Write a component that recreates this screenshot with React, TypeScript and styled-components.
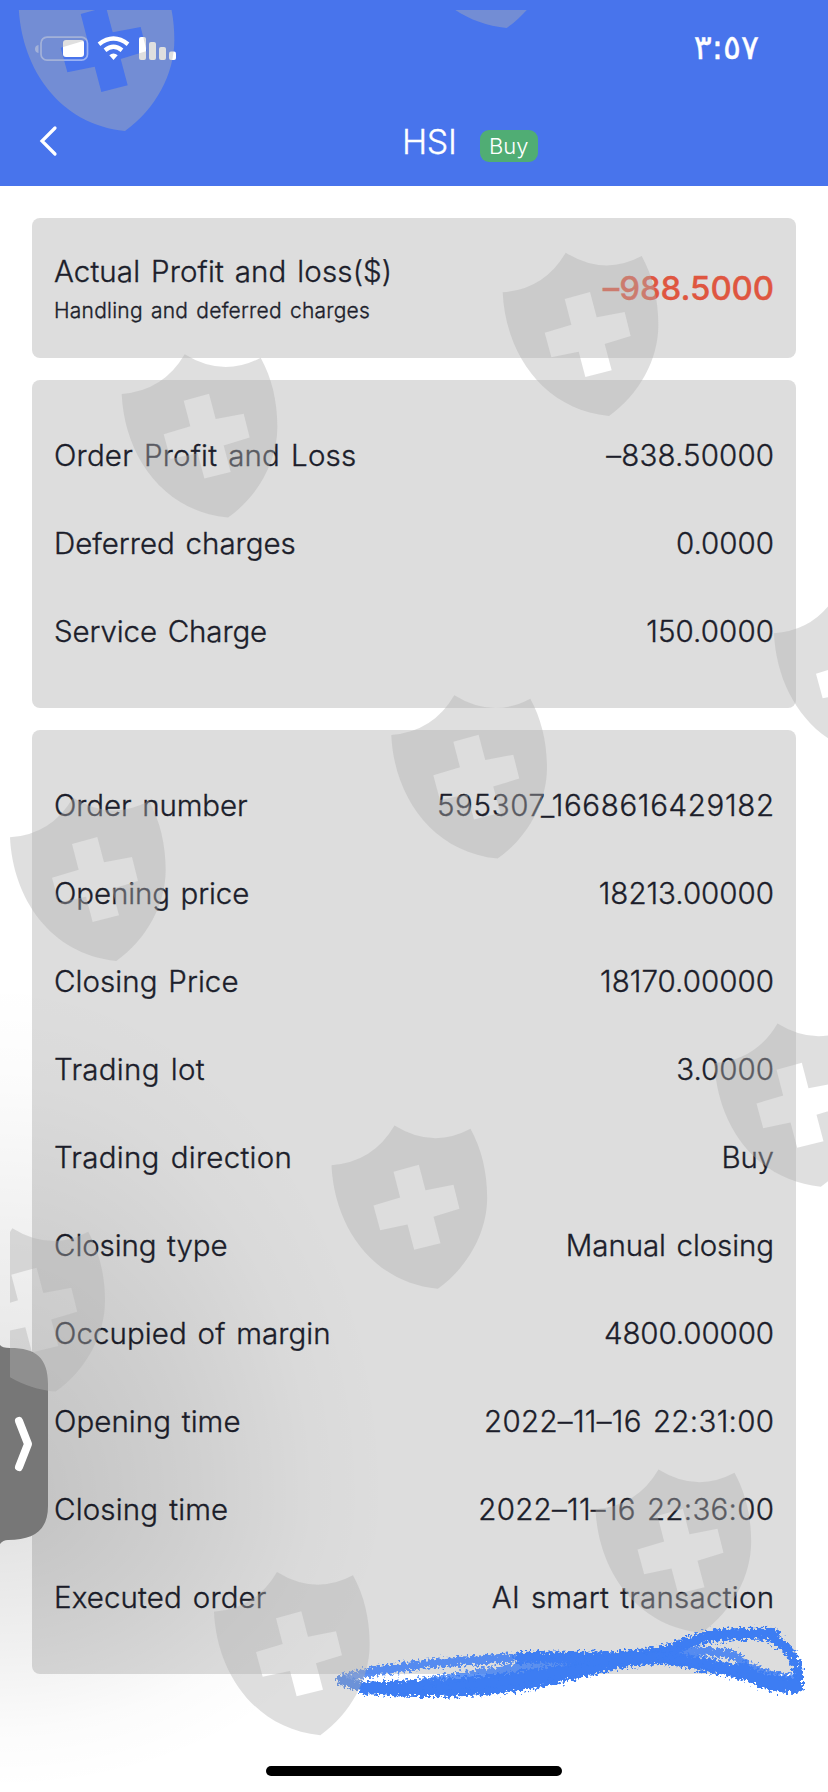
import React from 'react';
import styled, { createGlobalStyle } from 'styled-components';

const Global = createGlobalStyle`
  * { box-sizing: border-box; }
  body { margin: 0; background: #fff; font-family: Inter, "Liberation Sans", sans-serif; color: #1c1e2b; }
`;
const Page = styled.div`position: relative; width: 828px; height: 1792px; overflow: hidden; background: #fff;`;
const Header = styled.header`height: 186px; background: #4874ec; color: #fff; display: flex; flex-direction: column;`;
const StatusBar = styled.div`height: 96px; padding: 0 69px 0 34px; display: flex; justify-content: space-between; align-items: center;`;
const Clock = styled.time`font: 400 33.5px "DejaVu Sans", sans-serif; line-height: 98px; direction: ltr; unicode-bidi: bidi-override; -webkit-text-stroke: 0.4px currentColor;`;
const NavBar = styled.div`height: 90px; display: grid; grid-template-columns: 402px auto 1fr; align-items: start;`;
const Back = styled.button`border: 0; background: none; padding: 28px 0 0 38px; text-align: left; line-height: 0;`;
const Title = styled.h1`margin: 0; font-size: 34px; font-weight: 300; line-height: 92px; letter-spacing: -0.3px; -webkit-text-stroke: 0.3px currentColor;`;
const Tag = styled.span`justify-self: start; margin: 34px 0 0 23px; width: 58px; height: 32px; border-radius: 9px; background: #50ad74; font-size: 22px; font-weight: 300; line-height: 33px; text-align: center;`;
const Content = styled.main`padding: 32px 32px 0; display: flex; flex-direction: column; gap: 22px;`;
const Card = styled.section`background: #ddd; border-radius: 8px; padding: 31px 22px 33px; -webkit-text-stroke: 0.35px currentColor;`;
const Summary = styled(Card)`height: 140px; display: flex; justify-content: space-between; padding: 34px 22px;`;
const Heading = styled.div`font-size: 29.5px; font-weight: 300; line-height: 38px; letter-spacing: 0.12px; word-spacing: 2.5px;`;
const Sub = styled.div`font-size: 21px; font-weight: 300; line-height: 42px; letter-spacing: 0.24px; word-spacing: 2px;`;
const Loss = styled.strong`color: #df5640; font-size: 33px; font-weight: 500; line-height: 72px; letter-spacing: -0.1px;`;
const Row = styled.div`height: 88px; display: flex; align-items: center; justify-content: space-between; font-size: 29.5px; font-weight: 300; word-spacing: 2.5px;`;
const Label = styled.span<{ $tracking: number }>`letter-spacing: ${p => p.$tracking}px;`;
const Value = styled(Label)`margin-right: ${p => -p.$tracking}px;`;
const Layer = styled.svg`position: absolute; left: 0; top: 0; pointer-events: none;`;

type Entry = { label: string; value: string; lt: number; vt: number };
const charges: Entry[] = [
  { label: 'Order Profit and Loss', value: '–838.50000', lt: 0.2, vt: 0.15 },
  { label: 'Deferred charges', value: '0.0000', lt: 0, vt: 0 },
  { label: 'Service Charge', value: '150.0000', lt: -0.1, vt: 0.1 },
];
const order: Entry[] = [
  { label: 'Order number', value: '595307_1668616429182', lt: -0.1, vt: 0.66 },
  { label: 'Opening price', value: '18213.00000', lt: -0.1, vt: 0 },
  { label: 'Closing Price', value: '18170.00000', lt: 0.06, vt: 0.05 },
  { label: 'Trading lot', value: '3.0000', lt: 0.3, vt: 0 },
  { label: 'Trading direction', value: 'Buy', lt: 0.28, vt: -0.2 },
  { label: 'Closing type', value: 'Manual closing', lt: -0.1, vt: -0.1 },
  { label: 'Occupied of margin', value: '4800.00000', lt: 0.06, vt: -0.1 },
  { label: 'Opening time', value: '2022–11–16 22:31:00', lt: 0.05, vt: 0.32 },
  { label: 'Closing time', value: '2022–11–16 22:36:00', lt: 0.16, vt: 0.3 },
  { label: 'Executed order', value: 'AI smart transaction', lt: 0.12, vt: 0.24 },
];
const shields = [
  [18.7, -32.3], [400.4, -135.3], [502.7, 252.7], [121.7, 354.3], [774, 593.7], [391.3, 695.3],
  [10, 797.7], [714.5, 1023.5], [331.5, 1125.5], [-50.7, 1228.3], [595.5, 1469.5], [214, 1572],
];
const shieldPath =
  'M0 119Q125 110 189 0Q304 71 417 10C450 70 467 140 467 217C467 320 410 425 319 490C120 470 8 300 0 119Z' +
  'M186 139L206 216L126 240L146 314L228 297L248 373L327 353L306 274L384 250L366 178L282 194L262 118Z';

function StatusIcons() {
  return (
    <svg width="146" height="28" viewBox="34 35 146 28" fill="#fff">
      <path d="M38.500 46Q35 46.500 35 50Q35 53.500 38.500 54Z" opacity=".45" />
      <rect x="41" y="38.200" width="46.500" height="23" rx="6" fill="none" stroke="#fff" strokeWidth="1.700" opacity=".45" />
      <rect x="63" y="41" width="21" height="17" rx="3" />
      <g fill="none" stroke="#fff" strokeWidth="4.400">
        <path d="M99 45.200Q113.500 34 128 45.200" />
        <path d="M105 51.200Q113.500 44.500 122 51.200" />
      </g>
      <path d="M109.300 56.200Q113.500 53 117.700 56.200L113.500 61Z" />
      <rect x="139" y="38" width="7" height="23" rx="2" />
      <rect x="149" y="43" width="7" height="18" rx="2" />
      <rect x="159" y="48" width="7" height="13" rx="2" />
      <rect x="169" y="52.500" width="7" height="8.500" rx="2" />
    </svg>
  );
}

function Scribble() {
  return (
    <g fill="none" stroke="#3c7df3" strokeLinecap="round" strokeLinejoin="round" filter="url(#crayon)">
      <path d="M342 1679C385 1666 455 1661 510 1658" strokeWidth="9" opacity=".85" />
      <path d="M520 1658C580 1656 640 1663 680 1646C700 1637 715 1633 774 1634" strokeWidth="12" />
      <path d="M772 1638C794 1650 799 1663 798 1684" strokeWidth="10" />
      <path d="M342 1680C360 1690 390 1692 430 1692C480 1692 515 1688 555 1679C600 1669 630 1658 660 1656" strokeWidth="10" />
      <path d="M366 1688C445 1686 500 1682 565 1671C610 1662 640 1660 660 1657C700 1662 740 1674 795 1685" strokeWidth="13" />
      <path d="M420 1683C450 1679 490 1673 530 1666C570 1658 620 1660 660 1657" strokeWidth="10" opacity=".8" />
      <path d="M660 1654C690 1650 720 1650 735 1656C745 1664 755 1674 792 1679" strokeWidth="9" opacity=".85" />
      <path d="M670 1658C700 1660 730 1666 760 1678" strokeWidth="10" opacity=".85" />
      <path d="M743 1669C758 1682 773 1686 796 1686" strokeWidth="14" />
    </g>
  );
}

function ShadeStops() {
  return (
    <>
      <stop offset="0" stopOpacity=".125" />
      <stop offset=".5" stopOpacity=".06" />
      <stop offset=".8" stopOpacity=".015" />
      <stop offset="1" stopOpacity="0" />
    </>
  );
}

function Rows({ items }: { items: Entry[] }) {
  return (
    <Card>
      {items.map(e => (
        <Row key={e.label}>
          <Label $tracking={e.lt}>{e.label}</Label>
          <Value $tracking={e.vt}>{e.value}</Value>
        </Row>
      ))}
    </Card>
  );
}

export default function App() {
  return (
    <Page>
      <Global />
      <Header>
        <StatusBar><StatusIcons /><Clock>٣:٥٧</Clock></StatusBar>
        <NavBar>
          <Back aria-label="Back"><svg width="22" height="34" viewBox="0 0 22 34" fill="none" stroke="#fff" strokeWidth="3.200" strokeLinecap="round"><path d="M17 4L4 17L17 30" /></svg></Back>
          <Title>HSI</Title>
          <Tag>Buy</Tag>
        </NavBar>
      </Header>
      <Content>
        <Summary>
          <div><Heading>Actual Profit and loss($)</Heading><Sub>Handling and deferred charges</Sub></div>
          <Loss>–988.5000</Loss>
        </Summary>
        <Rows items={charges} />
        <Rows items={order} />
      </Content>
      <Layer width="828" height="1792" viewBox="0 0 828 1792">
        <defs>
          <radialGradient id="shadeTop" gradientUnits="userSpaceOnUse" cx="0" cy="0" r="1" gradientTransform="translate(0 1500) scale(390 520)"><ShadeStops /></radialGradient>
          <radialGradient id="shadeBottom" gradientUnits="userSpaceOnUse" cx="0" cy="0" r="1" gradientTransform="translate(0 1500) scale(390 290)"><ShadeStops /></radialGradient>
          <clipPath id="area"><rect x="10" y="10" width="818" height="1782" /></clipPath>
          <filter id="crayon" x="-5%" y="-20%" width="110%" height="140%">
            <feTurbulence type="fractalNoise" baseFrequency=".35" numOctaves="2" seed="4" result="n" />
            <feDisplacementMap in="SourceGraphic" in2="n" scale="12" xChannelSelector="R" yChannelSelector="G" />
          </filter>
        </defs>
        <rect y="900" width="420" height="600" fill="url(#shadeTop)" />
        <rect y="1500" width="420" height="292" fill="url(#shadeBottom)" />
        <Scribble />
        <path d="M0 1345Q2 1348 10 1348C36 1348 48 1358 48 1384V1506C48 1530 34 1540 8 1540Q3 1540 0 1544Z" fill="#777" />
        <path d="M19 1421L28 1444L19 1467" fill="none" stroke="#fff" strokeWidth="8" strokeLinecap="round" strokeLinejoin="round" />
        <rect x="266" y="1766" width="296" height="10" rx="5" />
        <g clipPath="url(#area)">
          {shields.map(([x, y]) => (
            <path key={`${x}-${y}`} d={shieldPath} fill="#b2b2b2" fillOpacity=".41" fillRule="evenodd" transform={`translate(${x} ${y}) scale(.3333)`} />
          ))}
        </g>
      </Layer>
    </Page>
  );
}
